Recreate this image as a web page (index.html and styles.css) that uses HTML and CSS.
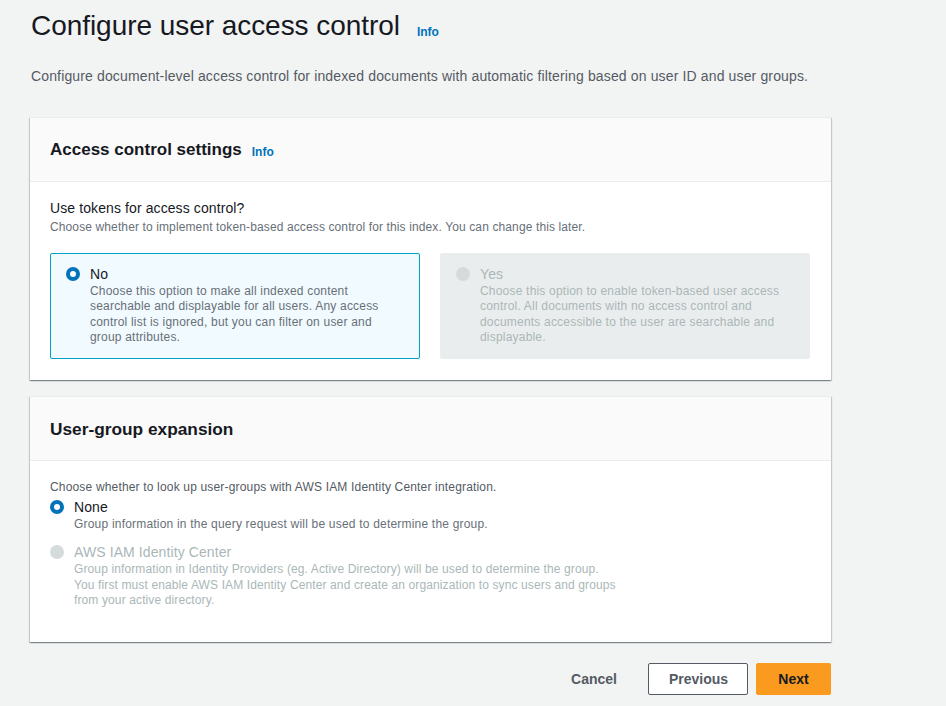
FILE: index.html
```html
<!DOCTYPE html>
<html>
<head>
<meta charset="utf-8">
<link rel="stylesheet" href="styles.css">
</head>
<body>
<div class="page">
  <div class="title-row">
    <h1 class="title">Configure user access control</h1>
    <a class="info info-title">Info</a>
  </div>
  <p class="lead">Configure document-level access control for indexed documents with automatic filtering based on user ID and user groups.</p>

  <section class="card">
    <div class="card-head">
      <h2 class="card-title">Access control settings</h2>
      <a class="info">Info</a>
    </div>
    <div class="card-body">
      <div class="field-label">Use tokens for access control?</div>
      <div class="field-desc">Choose whether to implement token-based access control for this index. You can change this later.</div>
      <div class="tiles">
        <div class="tile tile-selected">
          <span class="radio radio-on"></span>
          <div class="tile-text">
            <div class="opt-label">No</div>
            <div class="opt-desc">Choose this option to make all indexed content searchable and displayable for all users. Any access control list is ignored, but you can filter on user and group attributes.</div>
          </div>
        </div>
        <div class="tile tile-disabled">
          <span class="radio radio-dis"></span>
          <div class="tile-text">
            <div class="opt-label">Yes</div>
            <div class="opt-desc">Choose this option to enable token-based user access control. All documents with no access control and documents accessible to the user are searchable and displayable.</div>
          </div>
        </div>
      </div>
    </div>
  </section>

  <section class="card card2">
    <div class="card-head">
      <h2 class="card-title title2">User-group expansion</h2>
    </div>
    <div class="card-body body2">
      <div class="field-desc2">Choose whether to look up user-groups with AWS IAM Identity Center integration.</div>
      <div class="opt">
        <span class="radio radio-on"></span>
        <div class="tile-text">
          <div class="opt-label">None</div>
          <div class="opt-desc">Group information in the query request will be used to determine the group.</div>
        </div>
      </div>
      <div class="opt opt-disabled">
        <span class="radio radio-dis"></span>
        <div class="tile-text">
          <div class="opt-label">AWS IAM Identity Center</div>
          <div class="opt-desc">Group information in Identity Providers (eg. Active Directory) will be used to determine the group.<br>You first must enable AWS IAM Identity Center and create an organization to sync users and groups<br>from your active directory.</div>
        </div>
      </div>
    </div>
  </section>

  <div class="actions">
    <button class="btn btn-link">Cancel</button>
    <button class="btn btn-normal">Previous</button>
    <button class="btn btn-primary">Next</button>
  </div>
</div>
</body>
</html>
```

FILE: styles.css
```css
* { box-sizing: border-box; }
html, body { margin: 0; padding: 0; }
body {
  background: #f2f3f3;
  font-family: "Liberation Sans", Arial, sans-serif;
  color: #16191f;
  width: 946px;
  height: 706px;
  overflow: hidden;
}
.page {
  padding: 8px 0 0 30px;
  width: 831px;
}
.title-row {
  display: flex;
  align-items: baseline;
  padding-left: 1px;
}
.title {
  margin: 0;
  font-size: 28px;
  font-weight: 400;
  line-height: 36px;
  color: #16191f;
  letter-spacing: -0.05px;
}
.info {
  color: #0073bb;
  font-size: 12px;
  font-weight: 700;
  margin-left: 17px;
  text-decoration: none;
}
.info-title { position: relative; top: 1px; }
.lead {
  margin: 22px 0 0 1px;
  font-size: 14px;
  line-height: 20px;
  color: #545b64;
  letter-spacing: 0.14px;
}
.card {
  margin-top: 31px;
  background: #fff;
  box-shadow: 0 1px 1px 0 rgba(0,28,36,.3), 1px 1px 1px 0 rgba(0,28,36,.15), -1px 1px 1px 0 rgba(0,28,36,.15);
  border-top: 1px solid #eaeded;
}
.card2 { margin-top: 16px; }
.card-head {
  background: #fafafa;
  border-bottom: 1px solid #eaeded;
  height: 64px;
  display: flex;
  align-items: center;
  padding: 0 20px;
}
.card-head .info { margin-left: 10px; position: relative; top: 2px; }
.card-title {
  margin: 0;
  font-size: 17px;
  font-weight: 700;
  line-height: 22px;
  color: #16191f;
}
.title2 { font-size: 17.3px; }
.card-body {
  padding: 17px 20px 21px;
}
.field-label {
  font-size: 14px;
  line-height: 18px;
  letter-spacing: 0.1px;
}
.field-desc {
  font-size: 12px;
  line-height: 16px;
  color: #687078;
  margin-top: 2px;
  letter-spacing: 0.12px;
}
.tiles {
  display: grid;
  grid-template-columns: 370px 370px;
  column-gap: 20px;
  margin-top: 18px;
}
.tile {
  display: flex;
  align-items: flex-start;
  border-radius: 2px;
  padding: 10px 24px 13px 15px;
  height: 106px;
}
.tile-selected {
  background: #f1faff;
  border: 1px solid #00a1c9;
}
.tile-disabled {
  background: #eaeded;
  border: 1px solid #eaeded;
}
.radio {
  flex: none;
  width: 14px;
  height: 14px;
  border-radius: 50%;
  margin: 3px 10px 0 0;
}
.radio-on {
  border: 4px solid #0073bb;
  background: #fff;
}
.radio-dis {
  background: #d5dbdb;
}
.opt-label {
  font-size: 14px;
  line-height: 20px;
  letter-spacing: 0.1px;
}
.opt-desc {
  font-size: 12px;
  line-height: 15.4px;
  color: #687078;
  margin-top: 0;
  letter-spacing: 0.2px;
}
.tile-disabled .opt-label, .tile-disabled .opt-desc,
.opt-disabled .opt-label, .opt-disabled .opt-desc { color: #aab7b8; }
.body2 { padding-top: 17px; padding-bottom: 33px; }
.field-desc2 {
  font-size: 12px;
  line-height: 16px;
  color: #545b64;
  letter-spacing: 0.17px;
  margin-top: 1px;
}
.opt {
  display: flex;
  align-items: flex-start;
  margin-top: 2px;
}
.opt-disabled { margin-top: 10px; }
.opt-disabled .opt-desc { white-space: nowrap; letter-spacing: 0.12px; }
.actions {
  display: flex;
  justify-content: flex-end;
  align-items: center;
  margin-top: 21px;
  gap: 8px;
}
.btn {
  font-family: inherit;
  font-size: 14px;
  font-weight: 700;
  height: 32px;
  border-radius: 2px;
  padding: 0 20px;
  cursor: pointer;
}
.btn-link {
  background: none;
  border: 1px solid transparent;
  color: #545b64;
  margin-right: 2px;
  font-size: 14px;
}
.btn-normal {
  background: #fff;
  border: 1px solid #545b64;
  color: #545b64;
  width: 100px;
}
.btn-primary {
  background: #fa9a1f;
  border: 1px solid #fa9a1f;
  color: #16191f;
  width: 75px;
}
```
